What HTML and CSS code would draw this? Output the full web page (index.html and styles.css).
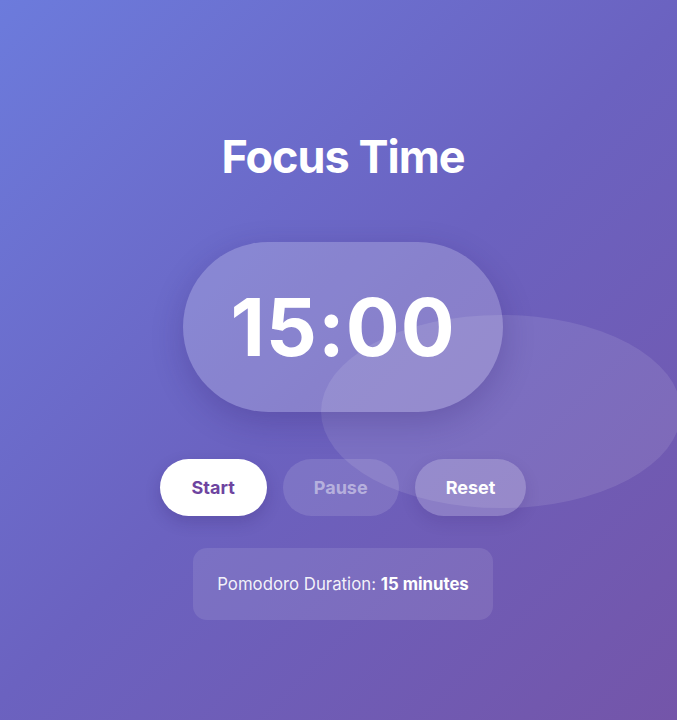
FILE: index.html
```html
<!DOCTYPE html>
<html lang="en">
<head>
  <meta charset="UTF-8" />
  <meta name="viewport" content="width=device-width, initial-scale=1.0" />
  <title>Focus Time</title>
  <link rel="stylesheet" href="styles.css">
</head>
<body>
  <!-- soft blob behind the timer -->
  <div class="blob"></div>

  <main class="pomodoro">
    <h1 class="title">Focus Time</h1>

    <div class="timer">
      <span class="timer-text">15:00</span>
    </div>

    <div class="controls">
      <button class="btn btn-start">Start</button>
      <button class="btn btn-pause" disabled>Pause</button>
      <button class="btn btn-reset">Reset</button>
    </div>

    <div class="info">
      Pomodoro Duration: <strong>15 minutes</strong>
    </div>
  </main>
</body>
</html>
```

FILE: styles.css
```css
* {
  margin: 0;
  padding: 0;
  box-sizing: border-box;
  font-family: 'Inter', 'Noto Sans', sans-serif;
}

body {
  height: 100vh;
  overflow: hidden;
  position: relative;
  background: linear-gradient(135deg, #6c7bdc 0%, #6b62c0 50%, #7455a9 100%);
  color: white;
}

.blob {
  position: absolute;
  left: 321px;
  top: 315px;
  width: 360px;
  height: 193px;
  border-radius: 50%;
  background: rgba(255, 255, 255, 0.1);
}

.pomodoro {
  position: relative;
  display: flex;
  flex-direction: column;
  align-items: center;
  padding-top: 130px;
  padding-left: 9px;
}

.title {
  font-size: 45px;
  line-height: 54px;
  font-weight: 700;
  letter-spacing: -1px;
}

.timer {
  margin-top: 58px;
  padding: 45px 47px;
  border-radius: 999px;
  background: rgba(255, 255, 255, 0.2);
  box-shadow: 0 10px 32px rgba(40, 20, 90, 0.22);
}

.timer-text {
  display: block;
  font-size: 80px;
  line-height: 80px;
  font-weight: 700;
  letter-spacing: 1px;
}

.controls {
  display: flex;
  gap: 16px;
  margin-top: 47px;
}

.btn {
  border: none;
  border-radius: 999px;
  padding: 18px 32px;
  font-size: 18px;
  line-height: 21px;
  font-weight: 700;
  cursor: pointer;
}

.btn-start {
  background: white;
  color: #6e44a0;
  box-shadow: 0 6px 16px rgba(40, 20, 90, 0.2);
}

.btn-pause {
  background: rgba(255, 255, 255, 0.12);
  color: rgba(255, 255, 255, 0.45);
  padding: 18px 31px;
}

.btn-reset {
  background: rgba(255, 255, 255, 0.2);
  color: white;
  padding: 18px 31px;
  box-shadow: 0 6px 16px rgba(40, 20, 90, 0.12);
}

.info {
  margin-top: 32px;
  padding: 24px 24px;
  border-radius: 14px;
  background: rgba(255, 255, 255, 0.1);
  font-size: 16.8px;
  line-height: 24px;
  color: rgba(255, 255, 255, 0.92);
}

.info strong {
  font-weight: 700;
  color: white;
}
```
